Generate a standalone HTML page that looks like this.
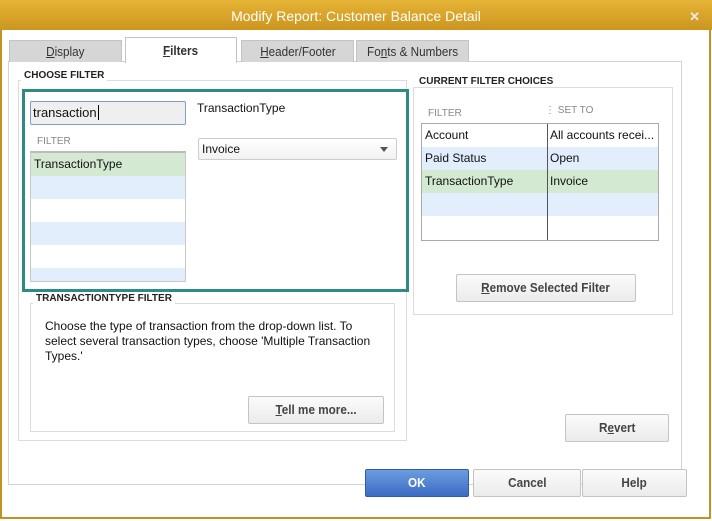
<!DOCTYPE html>
<html><head><style>
*{box-sizing:border-box;margin:0;padding:0}
body{width:712px;height:521px;background:#fff;position:relative;overflow:hidden;font-family:"Liberation Sans",sans-serif;font-size:12px;color:#111}
.a{position:absolute}
.win{left:0;top:0;width:711px;height:519px;border:2px solid #c49124;border-top:none;background:#fff}
.title{left:0;top:0;width:712px;height:30px;background:linear-gradient(#e5b436,#cc961f);color:#fff;font-size:14px;text-align:center;line-height:33px}
.tab{height:22px;background:#d6d6d6;border:1px solid #c4c4c4;border-bottom:none;text-align:center;line-height:22px;font-size:13px;color:#333}
.tab span,.btn span{display:inline-block;transform:scaleX(.9)}
.panel{left:8px;top:61px;width:674px;height:424px;border:1px solid #d4d4d4}
.grp{border:1px solid #dcdcdc}
.lbl{font-size:10px;font-weight:bold;background:#fff;padding:0 3px;color:#222}
.btn{border:1px solid #c4c4c4;border-radius:2px;background:linear-gradient(#fbfbfb,#ebebeb);text-align:center;font-size:13px;font-weight:bold;color:#444}
.row{height:23px;line-height:23px;padding-left:3px;font-size:12px}
.g{background:#d3e9d2}.b{background:#e2eefc}
</style></head><body>
<div class="a win"></div>
<div class="a title">Modify Report: Customer Balance Detail<span style="position:absolute;right:12px;top:0;color:#e9e9e9;font-size:13px;font-weight:bold">✕</span></div>
<div class="a panel"></div>
<div class="a tab" style="left:9px;top:40px;width:113px"><span><u>D</u>isplay</span></div>
<div class="a tab" style="left:125px;top:37px;width:112px;height:26px;background:#fff;font-weight:bold;line-height:26px"><span><u>F</u>ilters</span></div>
<div class="a tab" style="left:241px;top:40px;width:113px"><span><u>H</u>eader/Footer</span></div>
<div class="a tab" style="left:356px;top:40px;width:113px"><span>Fo<u>n</u>ts &amp; Numbers</span></div>

<div class="a grp" style="left:18px;top:80px;width:389px;height:361px"></div>
<div class="a lbl" style="left:21px;top:70px">CHOOSE FILTER</div>
<div class="a" style="left:22px;top:89px;width:387px;height:203px;border:3px solid #2e8b84"></div>
<div class="a" style="left:30px;top:101px;width:156px;height:24px;border:1px solid #7a9fd0;border-radius:2px;background:#efefef;font-size:13px;padding:3px 2px">transaction<span style="border-left:1px solid #000;margin-left:1px"></span></div>
<div class="a" style="left:37px;top:136px;font-size:10px;color:#888">FILTER</div>
<div class="a" style="left:30px;top:151px;width:156px;height:131px;border:1px solid #c8c8c8;border-top:2px solid #bbb;overflow:hidden">
<div class="row g">TransactionType</div><div class="row b"></div><div class="row"></div><div class="row b"></div><div class="row"></div><div class="row b"></div></div>
<div class="a" style="left:197px;top:101px;font-size:12px">TransactionType</div>
<div class="a" style="left:198px;top:138px;width:199px;height:22px;border:1px solid #ccc;border-radius:2px;background:linear-gradient(#fff,#f2f2f2);padding:3px 3px;font-size:12px">Invoice<span style="position:absolute;right:8px;top:8px;border:4px solid transparent;border-top:5px solid #555"></span></div>

<div class="a grp" style="left:30px;top:303px;width:365px;height:129px"></div>
<div class="a lbl" style="left:33px;top:293px">TRANSACTIONTYPE FILTER</div>
<div class="a" style="left:45px;top:319px;width:340px;line-height:15px;font-size:12px">Choose the type of transaction from the drop-down list. To select several transaction types, choose 'Multiple Transaction Types.'</div>
<div class="a btn" style="left:248px;top:396px;width:136px;height:28px;line-height:26px"><span><u>T</u>ell me more...</span></div>

<div class="a grp" style="left:413px;top:87px;width:260px;height:228px"></div>
<div class="a lbl" style="left:416px;top:76px">CURRENT FILTER CHOICES</div>
<div class="a" style="left:428px;top:108px;font-size:10px;color:#888">FILTER</div>
<div class="a" style="left:545px;top:105px;font-size:10px;color:#888">⋮ SET TO</div>
<div class="a" style="left:421px;top:123px;width:238px;height:118px;border:1px solid #aaa;overflow:hidden">
<div class="row">Account</div><div class="row b">Paid Status</div><div class="row g">TransactionType</div><div class="row b"></div>
<div class="a" style="left:125px;top:0;width:113px">
<div class="row" style="white-space:nowrap">All accounts recei...</div><div class="row">Open</div><div class="row">Invoice</div></div>
<div class="a" style="left:125px;top:0;width:1px;height:118px;background:#555"></div></div>
<div class="a btn" style="left:456px;top:274px;width:180px;height:28px;line-height:26px"><span><u>R</u>emove Selected Filter</span></div>
<div class="a btn" style="left:565px;top:414px;width:104px;height:28px;line-height:26px"><span>R<u>e</u>vert</span></div>

<div class="a btn" style="left:365px;top:469px;width:104px;height:28px;line-height:26px;background:linear-gradient(#6b9de0,#3c6cc4);border-color:#2f5ba8;color:#fff"><span>OK</span></div>
<div class="a btn" style="left:473px;top:469px;width:108px;height:28px;line-height:26px"><span>Cancel</span></div>
<div class="a btn" style="left:582px;top:469px;width:105px;height:28px;line-height:26px"><span>Help</span></div>
</body></html>
